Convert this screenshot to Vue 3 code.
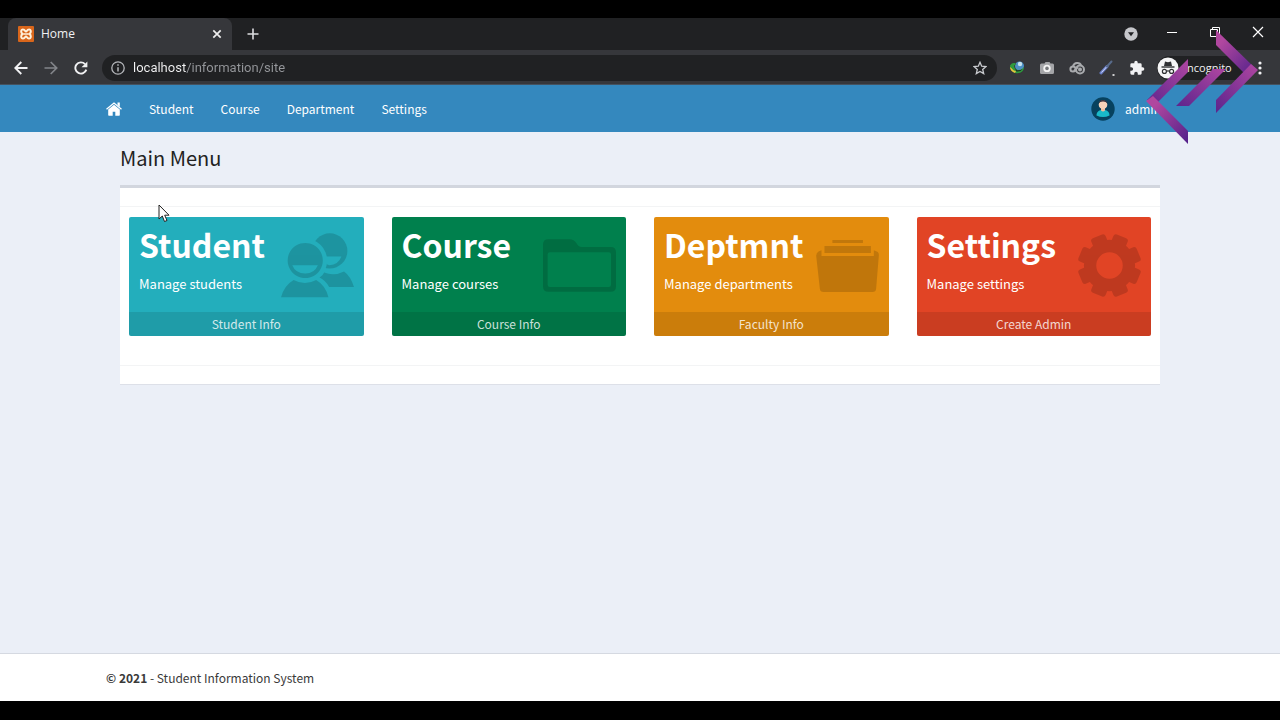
<script setup>
import { ref } from 'vue'

const address = ref('localhost/information/site')
const links = ['Student', 'Course', 'Department', 'Settings']
const cards = [
  { tone: 'aqua', title: 'Student', text: 'Manage students', foot: 'Student Info', icon: 'people' },
  { tone: 'green', title: 'Course', text: 'Manage courses', foot: 'Course Info', icon: 'folder' },
  { tone: 'amber', title: 'Deptmnt', text: 'Manage departments', foot: 'Faculty Info', icon: 'files' },
  { tone: 'red', title: 'Settings', text: 'Manage settings', foot: 'Create Admin', icon: 'cog' },
]
const teeth = [0, 1, 2, 3, 4, 5, 6, 7].map((n) => n * 45 + 22.5)
</script>

<template>
  <div class="screen">
    <div class="chrome">
      <div class="tabs">
        <div class="tab">
          <svg class="favicon" viewBox="0 0 16 16" width="16" height="16">
            <rect width="16" height="16" rx="1" fill="#d9661b" />
            <path d="M5.2 3.4C2.6 3.2 2.6 7 4.6 8 2.6 9 2.600 12.800 5.200 12.600 7 12.600 7 10.500 8 10.500s1 2.100 2.800 2.100c2.600.2 2.600-3.600.6-4.600 2-1 2-4.800-.6-4.600C9 3.400 9 5.500 8 5.500S7 3.400 5.200 3.400z" fill="none" stroke="#fff1dc" stroke-width="2" />
            <path d="M6 8h4" stroke="#fff1dc" stroke-width="1.500" />
          </svg>
          <span class="tab-title">Home</span>
          <button class="plain" aria-label="Close tab">
            <svg viewBox="0 0 10 10" width="10" height="10"><path d="M1.300 1.300l7.400 7.400M8.700 1.300L1.300 8.700" stroke="#eee" stroke-width="1.700" /></svg>
          </button>
        </div>
        <button class="plain add" aria-label="New tab">
          <svg viewBox="0 0 12 12" width="12" height="12"><path d="M6 .5v11M.5 6h11" stroke="#dcdde0" stroke-width="1.600" /></svg>
        </button>
        <div class="window">
          <button class="plain" aria-label="Search tabs">
            <svg viewBox="0 0 14 14" width="14" height="14"><circle cx="7" cy="7" r="6.700" fill="#c6c7cb" /><path d="M4 5.300h6L7 9.300z" fill="#202124" /></svg>
          </button>
          <button class="plain" aria-label="Minimize">
            <svg viewBox="0 0 12 12" width="12" height="12"><path d="M1 6.500h10" stroke="#fff" /></svg>
          </button>
          <button class="plain" aria-label="Restore">
            <svg viewBox="0 0 12 12" width="12" height="12"><path d="M1.500 3.500h7v7h-7zM3.500 3.500v-2h7v7h-2" fill="none" stroke="#fff" /></svg>
          </button>
          <button class="plain" aria-label="Close window">
            <svg viewBox="0 0 12 12" width="12" height="12"><path d="M1 1l10 10M11 1L1 11" stroke="#fff" stroke-width="1.200" /></svg>
          </button>
        </div>
      </div>
      <div class="toolbar">
        <div class="moves">
          <button class="plain" aria-label="Back">
            <svg viewBox="0 0 14 14" width="14" height="14"><path d="M13.500 7H1.500M7.300 1L1.300 7l6 6" fill="none" stroke="#f1f1f3" stroke-width="1.900" /></svg>
          </button>
          <button class="plain" aria-label="Forward">
            <svg viewBox="0 0 14 14" width="14" height="14"><path d="M.5 7h12M6.700 1l6 6-6 6" fill="none" stroke="#83858a" stroke-width="1.700" /></svg>
          </button>
          <button class="plain" aria-label="Reload">
            <svg viewBox="0 0 14 14" width="14" height="14"><path d="M12.300 8.600A5.600 5.600 0 1 1 11 3.100" fill="none" stroke="#f1f1f3" stroke-width="1.900" /><path d="M13.400.4v5.900H7.500z" fill="#f1f1f3" /></svg>
          </button>
        </div>
        <div class="address">
          <svg viewBox="0 0 14 14" width="14" height="14"><circle cx="7" cy="7" r="6.200" fill="none" stroke="#b4b6ba" stroke-width="1.300" /><path d="M7 6.200v4.300M7 3.300v1.500" stroke="#b4b6ba" stroke-width="1.500" /></svg>
          <input v-model="address" aria-label="Address" />
          <button class="plain" aria-label="Bookmark">
            <svg viewBox="0 0 14 14" width="14" height="14"><path d="M7 1.300l1.700 3.900 4.200.4-3.200 2.800 1 4.200L7 10.400l-3.700 2.200 1-4.200L1.100 5.600l4.200-.4z" fill="none" stroke="#c9cbcf" stroke-width="1.300" /></svg>
          </button>
        </div>
        <div class="extensions">
          <button class="plain" aria-label="Download manager">
            <svg viewBox="0 0 16 16" width="16" height="16"><circle cx="10.500" cy="6" r="4.500" fill="#4c8fc4" /><circle cx="11" cy="4" r="2.200" fill="#c4e2ee" /><path d="M1 5.500C3 2 6.500 2.500 7.500 4.500c-2.500 0-3 2-1.500 4 2 2 5 2 7.500 0l1.500-1.500c0 4.500-4 7-8.500 6C3 12 1 9 1 5.500z" fill="#2f9a3d" /><path d="M1 7c1 0 3 4 6 4l-1 2C3 12 1 10 1 7z" fill="#e6c63c" /><path d="M6 9q3 2.500 7.500 0-2 3-6 2.500z" fill="#1c2f25" /></svg>
          </button>
          <button class="plain" aria-label="Screenshot">
            <svg viewBox="0 0 16 16" width="16" height="16"><path d="M2.500 3.500h3l1-1.500h4l1 1.500h2a1.500 1.500 0 0 1 1.500 1.500v7.500A1.500 1.500 0 0 1 13.500 14h-11A1.500 1.500 0 0 1 1 12.500V5a1.500 1.500 0 0 1 1.500-1.500z" fill="#a4a5a8" /><circle cx="8" cy="8.400" r="3.700" fill="#f3f3f3" /><circle cx="8" cy="8.400" r="1.800" fill="#77797c" /></svg>
          </button>
          <button class="plain" aria-label="Link tool">
            <svg viewBox="0 0 16 16" width="16" height="16" fill="none" stroke="#a9abae" stroke-width="2"><circle cx="4" cy="9" r="2.600" /><path d="M4 6.400C5 2 11 2 12 5.500" /><circle cx="11" cy="9.500" r="4" /><circle cx="11" cy="9.500" r="1" /><path d="M5 11l4-4" /></svg>
          </button>
          <button class="plain" aria-label="Color picker">
            <svg viewBox="0 0 16 16" width="16" height="16"><path d="M2 13l6-6.500" stroke="#6a7fc8" stroke-width="3" stroke-linecap="round" /><path d="M2.500 12.500l5-5.500" stroke="#d4dbfa" stroke-width="1" /><path d="M8 6.500l4.500-5" stroke="#586b8b" stroke-width="2" stroke-linecap="round" /><path d="M13.500 15h2" stroke="#fff" stroke-width="1.500" /></svg>
          </button>
          <button class="plain" aria-label="Extensions">
            <svg viewBox="0 0 24 24" width="16" height="16"><path fill="#f1f1f3" d="M20.500 11H19V7a2 2 0 0 0-2-2h-4V3.500a2.500 2.500 0 0 0-5 0V5H4a2 2 0 0 0-2 2v3.800h1.500a2.700 2.700 0 0 1 0 5.400H2V20a2 2 0 0 0 2 2h3.800v-1.500a2.700 2.700 0 0 1 5.400 0V22H17a2 2 0 0 0 2-2v-4h1.500a2.500 2.500 0 0 0 0-5z" /></svg>
          </button>
        </div>
        <div class="incognito">
          <svg viewBox="0 0 22 22" width="22" height="22"><circle cx="11" cy="11" r="10.500" fill="#f5f5f6" /><path d="M7 9l1-4.500 3 .7 3-.7L15 9z" fill="#303134" /><path d="M4.500 10h13" stroke="#303134" stroke-width="1.400" /><path d="M9.300 14.300q1.700-1 3.400 0" fill="none" stroke="#303134" stroke-width="1.200" /><circle cx="7.400" cy="14.400" r="2" fill="none" stroke="#303134" stroke-width="1.200" /><circle cx="14.600" cy="14.400" r="2" fill="none" stroke="#303134" stroke-width="1.200" /></svg>
          <span>Incognito</span>
        </div>
        <button class="plain" aria-label="Browser menu">
          <svg viewBox="0 0 4 14" width="4" height="14" fill="#f1f1f3"><circle cx="2" cy="2" r="1.600" /><circle cx="2" cy="7" r="1.600" /><circle cx="2" cy="12" r="1.600" /></svg>
        </button>
      </div>
    </div>

    <header class="navbar">
      <nav>
        <a href="#" aria-label="Home">
          <svg viewBox="0 0 16 14" width="16" height="14" fill="#fff"><path d="M8 2.800l5.800 4.800v5.500a.7.7 0 0 1-.7.700H9.300V9.800H6.700v4H2.900a.7.7 0 0 1-.7-.7V7.600z" /><path d="M.5 7.300L8 1l7.500 6.300" fill="none" stroke="#fff" stroke-width="1.300" /><path d="M11.500.5h2.300v4.500l-2.300-2z" /></svg>
        </a>
        <a v-for="link in links" :key="link" href="#">{{ link }}</a>
      </nav>
      <a class="user" href="#">
        <svg viewBox="0 0 24 24" width="24" height="24"><circle cx="12" cy="12" r="11.700" fill="#07425f" /><path d="M5.500 18.500c0-3.500 2-5.500 6.500-5.500s6.500 2 6.500 5.500q-6.500 3-13 0z" fill="#19b9c9" /><path d="M10 10h4v3.500q-2 2-4 0z" fill="#eebf9d" /><circle cx="12" cy="7.800" r="4.300" fill="#f6d3ba" /><path d="M7.600 6.800C7.600 1.800 16.400 1.800 16.400 6.800 15 3.800 9 3.800 7.600 6.800z" fill="#3d3540" /></svg>
        <span>admin</span>
      </a>
    </header>

    <main>
      <h1>Main Menu</h1>
      <section class="box">
        <div class="box-head"></div>
        <div class="cards">
          <article v-for="card in cards" :key="card.title" class="card" :class="card.tone">
            <div class="card-body">
              <div class="card-text">
                <h2>{{ card.title }}</h2>
                <p>{{ card.text }}</p>
              </div>
              <svg v-if="card.icon === 'people'" class="icon" viewBox="512 158 220 194" width="73" height="65">
                <mask id="behind">
                  <rect x="500" y="150" width="240" height="210" fill="#fff" />
                  <circle cx="585" cy="240" r="66" fill="#000" />
                  <path d="M640 228h54q-10 26-36 26-14 0-18-26z" fill="#000" />
                </mask>
                <g mask="url(#behind)">
                  <circle cx="659" cy="211" r="53" />
                  <path d="M628 291q10-5 14-15 30 12 60-3 20 14 30 47h-75q-10-20-29-29z" />
                </g>
                <path fill-rule="evenodd" d="M585 187a53 53 0 1 0 .1 0zM546 254h77q-10 25-38 25-29 0-39-25z" />
                <path d="M512 351q10-36 38-52 34 18 68 0 28 16 37 52z" />
              </svg>
              <svg v-else-if="card.icon === 'folder'" class="icon" viewBox="489 117 220 158" width="73" height="53">
                <path fill-rule="evenodd" d="M505 117h65q12 0 20 12 5 11 16 11h87q16 0 16 16v103q0 16-16 16H505q-16 0-16-16V133q0-16 16-16zM510 156q-7 0-7 7v91q0 7 7 7h177q7 0 7-7v-91q0-7-7-7z" />
              </svg>
              <svg v-else-if="card.icon === 'files'" class="icon" viewBox="527 117 189 157" width="63" height="52">
                <path d="M576 117h92v9h-92zM552 135h140v21H552z" />
                <path d="M534 152l9-4v17h158v-17l12 5q4 4 3 12l-8 99q-1 10-11 10H549q-10 0-11-10l-11-99q0-9 7-13z" />
              </svg>
              <svg v-else class="icon" viewBox="-94 -94 188 188" width="63" height="63">
                <circle r="58" fill="none" stroke="#000" stroke-width="37" />
                <rect v-for="turn in teeth" :key="turn" x="-23" y="-94" width="46" height="38" rx="8" :transform="`rotate(${turn})`" />
              </svg>
            </div>
            <a class="card-foot" href="#">{{ card.foot }}</a>
          </article>
        </div>
        <div class="box-foot"></div>
      </section>
      <svg class="pointer" viewBox="0 0 12 19" width="12" height="19"><path d="M1 1v14l3.300-3 2.200 5.500 2.500-1-2.300-5.300H11z" fill="#fff" stroke="#222" stroke-width="1" /></svg>
    </main>

    <footer><strong>© 2021</strong> - Student Information System</footer>

    <svg class="brand" viewBox="0 0 113 117" width="113" height="117">
      <defs>
        <linearGradient id="fall" x1="0" y1="0" x2="1" y2="1"><stop offset=".2" stop-color="#b0479f" /><stop offset="1" stop-color="#51208a" /></linearGradient>
        <linearGradient id="rise" x1="1" y1="0" x2="0" y2="1"><stop offset=".1" stop-color="#a8439f" /><stop offset="1" stop-color="#5c258d" /></linearGradient>
      </defs>
      <path d="M42 32v13L8 79 1 73z" fill="url(#rise)" />
      <path d="M0 74l7-5 35 35v13z" fill="url(#fall)" />
      <path d="M30 79l37-37h13L43 79z" fill="url(#rise)" />
      <path d="M70 3l39 38-8 8-31-31z" fill="url(#fall)" />
      <path d="M105 37l7 6-42 43V73z" fill="url(#rise)" />
    </svg>
  </div>
</template>

<style>
body {
  margin: 0;
  background: #000;
}
</style>

<style scoped>
* {
  box-sizing: border-box;
}
.screen {
  position: relative;
  display: flex;
  flex-direction: column;
  min-height: 100vh;
  padding: 18px 0 19px;
  background: #000;
  font: 12px/18px "Noto Sans CJK SC", "Open Sans", sans-serif;
  color: #3a3a3a;
}
svg {
  display: block;
  flex: none;
}
a {
  color: inherit;
  text-decoration: none;
}
h1, h2, p {
  margin: 0;
}
.plain {
  display: flex;
  padding: 0;
  border: 0;
  background: none;
}
.chrome {
  background: #36373b;
  color: #f1f1f3;
  font-family: "Open Sans", sans-serif;
  border-bottom: 1px solid #45525f;
}
.tabs {
  display: flex;
  align-items: center;
  height: 32px;
  padding-left: 8px;
  background: #202123;
}
.tab {
  display: flex;
  align-items: center;
  align-self: stretch;
  width: 224px;
  padding: 0 10px;
  border-radius: 8px 8px 0 0;
  background: #36373b;
}
.tab-title {
  flex: 1;
  margin-left: 7px;
}
.add {
  margin-left: 15px;
}
.window {
  display: flex;
  align-items: center;
  gap: 31px;
  margin-left: auto;
  padding-right: 16px;
}
.window .plain {
  padding-bottom: 4px;
}
.window .plain:first-child {
  padding-bottom: 0;
  margin-right: -3px;
}
.toolbar {
  display: flex;
  align-items: center;
  height: 34px;
  padding: 2px 18px 0 14px;
}
.moves {
  display: flex;
  gap: 16px;
  margin-right: 14px;
}
.address {
  display: flex;
  flex: 1;
  align-items: center;
  height: 26px;
  padding: 0 10px 0 9px;
  border-radius: 13px;
  background: #202123;
}
.address input {
  flex: 1;
  min-width: 0;
  margin-left: 8px;
  padding: 0;
  border: 0;
  outline: 0;
  font: 13px/18px Roboto, sans-serif;
  color: transparent;
  background: linear-gradient(90deg, #f4f4f5 53px, #95979b 53px);
  background-clip: text;
}
.extensions {
  display: flex;
  gap: 14px;
  margin: 0 12px;
}
.incognito {
  display: flex;
  align-items: center;
  gap: 5px;
  width: 91px;
  height: 24px;
  margin-right: 10px;
  border-radius: 12px;
  background: #202123;
  font-size: 11px;
}
.navbar {
  display: flex;
  align-items: center;
  justify-content: space-between;
  height: 47px;
  padding: 0 106px;
  background: #3488be;
  color: #fff;
}
nav {
  display: flex;
  align-items: center;
  gap: 27px;
}
.user {
  display: flex;
  align-items: center;
  gap: 10px;
  margin-right: 13px;
}
main {
  position: relative;
  flex: 1;
  padding: 12px 120px;
  background: #ebeff7;
}
h1 {
  font-size: 20px;
  font-weight: 400;
  line-height: 28px;
  color: #222;
}
.box {
  margin-top: 13px;
  border-top: 3px solid #d2d6de;
  border-bottom: 1px solid #dde0e8;
  background: #fff;
}
.box-head {
  height: 19px;
  border-bottom: 1px solid #f3f4f5;
}
.cards {
  display: grid;
  grid-template-columns: repeat(4, 1fr);
  gap: 28px;
  padding: 10px 9px 29px;
}
.card {
  overflow: hidden;
  border-radius: 2px;
  color: #fff;
}
.aqua { background: #23aebc; }
.green { background: #00804d; }
.amber { background: #e38c0d; }
.red { background: #e14425; }
.card-body {
  display: flex;
  align-items: center;
  justify-content: space-between;
  height: 95px;
  padding: 2px 10px 0;
}
.card-text {
  align-self: flex-start;
  width: 0;
  padding-top: 7px;
  white-space: nowrap;
}
h2 {
  font-size: 32px;
  font-weight: 700;
  line-height: 36px;
}
p {
  margin-top: 12px;
  font-size: 13px;
  line-height: 20px;
}
.icon {
  opacity: 0.15;
}
.card-foot {
  display: block;
  background: rgba(0, 0, 0, 0.1);
  color: rgba(255, 255, 255, 0.8);
  line-height: 24px;
  text-align: center;
}
.box-foot {
  height: 19px;
  border-top: 1px solid #f3f4f5;
}
.pointer {
  position: absolute;
  left: 158px;
  top: 72px;
}
footer {
  height: 48px;
  padding: 15px 106px;
  border-top: 1px solid #d5d9e1;
  background: #fff;
}
.brand {
  position: absolute;
  right: 21px;
  top: 27px;
}
</style>
